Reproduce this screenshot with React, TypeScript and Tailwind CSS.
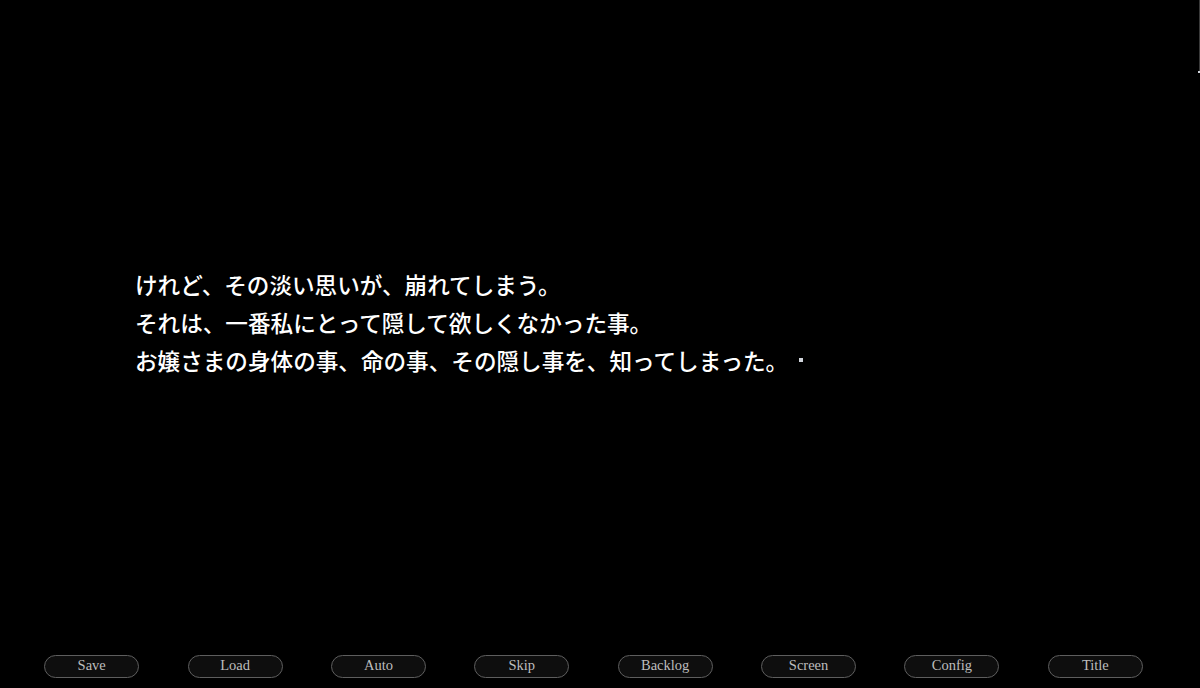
import React from 'react';

const lines = [
  'けれど、その淡い思いが、崩れてしまう。',
  'それは、一番私にとって隠して欲しくなかった事。',
  'お嬢さまの身体の事、命の事、その隠し事を、知ってしまった。',
];

const menu = ['Save', 'Load', 'Auto', 'Skip', 'Backlog', 'Screen', 'Config', 'Title'];

export default function App() {
  return (
    <div className="relative flex h-[688px] w-[1200px] flex-col overflow-hidden bg-black">
      {/* message window */}
      <div
        className="pl-[135px] pt-[266px] text-[22.6px] leading-[38px] font-medium text-white"
        style={{ fontFamily: '"Noto Sans CJK JP", "Noto Sans", sans-serif' }}
      >
        {lines.map((line, i) => (
          <p key={i} className="flex items-center whitespace-nowrap">
            {line}
            {i === lines.length - 1 && (
              <span className="ml-[11px] mb-[3px] inline-block h-[4px] w-[4px] bg-gray-300" />
            )}
          </p>
        ))}
      </div>

      <div className="flex-1" />

      {/* quick menu */}
      <nav className="grid grid-cols-8 pl-[20px] pr-[33px] pb-[10px]">
        {menu.map((label) => (
          <div key={label} className="flex justify-center">
            <button
              className="flex h-[23px] w-[95px] items-center justify-center rounded-full border-[1.5px] border-[#5e5e5e] bg-[#0e0e0e] pb-[1px] text-[14.5px] text-[#bdbdbd]"
              style={{ fontFamily: '"Liberation Serif", "DejaVu Serif", serif' }}
            >
              {label}
            </button>
          </div>
        ))}
      </nav>

      {/* scroll marker on the right edge */}
      <div className="absolute right-0 top-0 h-[73px] w-[1px] bg-[#3a3a3a]" />
      <div className="absolute right-0 top-[71px] h-[2px] w-[2px] bg-gray-300" />
    </div>
  );
}
